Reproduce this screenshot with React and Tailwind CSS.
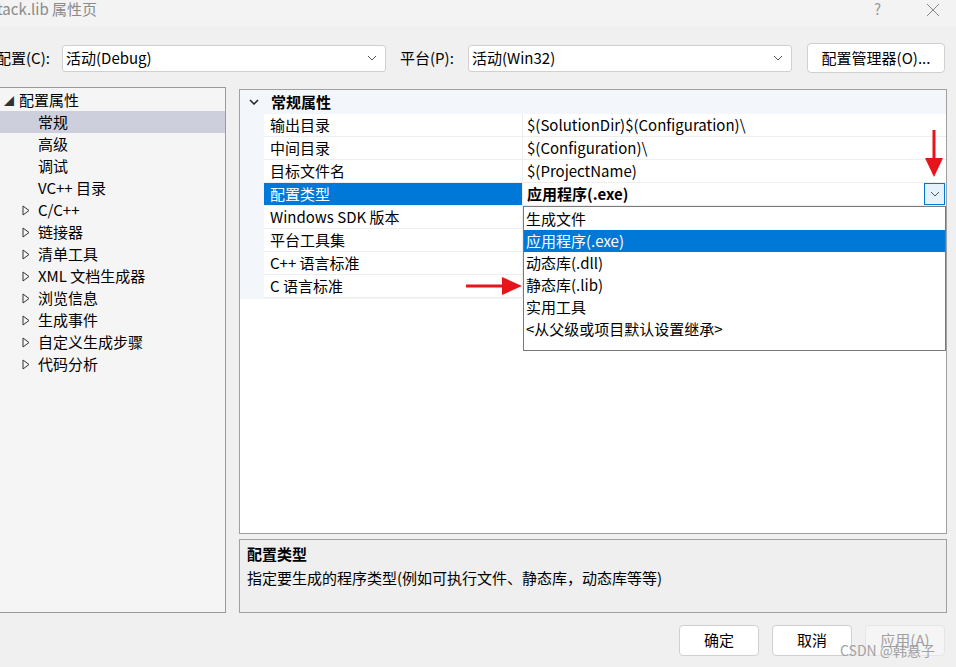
import React from "react";

const font = { fontFamily: '"Noto Sans CJK SC", "Noto Sans", sans-serif' };

const Chevron = ({ className }) => (
	<svg width="10" height="6" viewBox="0 0 10 6" className={className}>
		<path d="M1 1 L5 5 L9 1" fill="none" stroke="#555" strokeWidth="1" />
	</svg>
);

const RightTri = () => (
	<svg width="8" height="11" viewBox="0 0 8 11">
		<path d="M1 1 L7 5.5 L1 10 Z" fill="none" stroke="#333" strokeWidth="1" />
	</svg>
);

const treeItems = [
	{ label: "常规", child: true, selected: true },
	{ label: "高级", child: true },
	{ label: "调试", child: true },
	{ label: "VC++ 目录", child: true },
	{ label: "C/C++" },
	{ label: "链接器" },
	{ label: "清单工具" },
	{ label: "XML 文档生成器" },
	{ label: "浏览信息" },
	{ label: "生成事件" },
	{ label: "自定义生成步骤" },
	{ label: "代码分析" },
];

const props = [
	["输出目录", "$(SolutionDir)$(Configuration)\\"],
	["中间目录", "$(Configuration)\\"],
	["目标文件名", "$(ProjectName)"],
	["配置类型", "应用程序(.exe)", true],
	["Windows SDK 版本", ""],
	["平台工具集", ""],
	["C++ 语言标准", ""],
	["C 语言标准", ""],
];

const options = [
	"生成文件",
	"应用程序(.exe)",
	"动态库(.dll)",
	"静态库(.lib)",
	"实用工具",
	"<从父级或项目默认设置继承>",
];

export default function App() {
	return (
		<div
			style={font}
			className="w-[956px] h-[667px] bg-[#f0f0f0] text-[15px] text-black overflow-hidden relative">
			{/* title bar */}
			<div className="h-[27px] bg-[#f3f3f3] flex items-center justify-between">
				<span className="ml-[-3px] text-[#8a8a8a] -mt-[8px]">tack.lib 属性页</span>
				<div className="flex items-center gap-[45px] mr-[16px] -mt-[8px] text-[#9a9a9a]">
					<span className="text-[15px]">?</span>
					<svg width="14" height="14" viewBox="0 0 14 14">
						<path d="M1 1 L13 13 M13 1 L1 13" stroke="#888" strokeWidth="1" />
					</svg>
				</div>
			</div>

			{/* toolbar */}
			<div className="h-[60px] flex items-center pt-[2px]">
				<span className="ml-[-4px] w-[66px]">配置(C):</span>
				<div className="w-[324px] h-[27px] bg-white border border-[#d0d0d0] rounded-[3px] flex items-center justify-between px-[3px]">
					<span>活动(Debug)</span>
					<Chevron className="mr-[5px]" />
				</div>
				<span className="ml-[14px] w-[68px]">平台(P):</span>
				<div className="w-[324px] h-[27px] bg-white border border-[#d0d0d0] rounded-[3px] flex items-center justify-between px-[3px]">
					<span>活动(Win32)</span>
					<Chevron className="mr-[5px]" />
				</div>
				<div className="ml-[15px] w-[138px] h-[30px] bg-white border border-[#d0d0d0] rounded-[4px] flex items-center justify-center">
					配置管理器(O)...
				</div>
			</div>

			{/* main */}
			<div className="flex h-[526px]">
				<div className="w-[226px] bg-[#f5f5f5] border-t border-r border-b border-[#999] pt-[1px]">
					<div className="h-[22px] flex items-center">
						<span className="ml-[4px] w-[15px] text-[10px] text-[#333]">◢</span>
						<span>配置属性</span>
					</div>
					{treeItems.map((it) => (
						<div
							key={it.label}
							className={`h-[22px] flex items-center ${it.selected ? "bg-[#cdd0dc]" : ""}`}>
							<span className="w-[38px] flex justify-end pr-[8px]">
								{!it.child && <RightTri />}
							</span>
							<span>{it.label}</span>
						</div>
					))}
				</div>

				<div className="ml-[13px] w-[708px] flex flex-col">
					{/* property grid */}
					<div className="mt-[2px] h-[446px] bg-white border border-[#a0a0a0] relative">
						<div className="h-[24px] bg-[#f3f6fb] flex items-center font-bold">
							<svg width="10" height="6" viewBox="0 0 10 6" className="ml-[9px] mr-[12px]">
								<path d="M1 1 L5 5 L9 1" fill="none" stroke="#222" strokeWidth="1.5" />
							</svg>
							<span>常规属性</span>
						</div>
						{props.map(([name, value, sel]) => (
							<div key={name} className="flex h-[23px] bg-[#f3f6fb]">
								<div className="w-[24px]" />
								<div
									className={`w-[258px] flex items-center pl-[6px] border-b border-[#eeeeee] ${sel ? "bg-[#0078d7] text-white" : "bg-white"}`}>
									{name}
								</div>
								<div className="w-px bg-[#eeeeee]" />
								<div
									className={`flex-1 flex items-center justify-between pl-[4px] bg-white border-b border-[#eeeeee] ${sel ? "font-bold" : ""}`}>
									<span>{value}</span>
									{sel && (
										<div className="w-[21px] h-[22px] bg-[#e5f1fb] border border-[#0078d7] flex items-center justify-center mr-[1px]">
											<Chevron />
										</div>
									)}
								</div>
							</div>
						))}
						<div className="h-[1px] bg-[#f3f6fb]" />

						{/* dropdown list */}
						<div className="absolute left-[283px] top-[116px] w-[423px] h-[145px] bg-white border border-[#7a7a7a] pt-[1px]">
							{options.map((o, i) => (
								<div
									key={o}
									className={`h-[22px] flex items-center pl-[2px] ${i === 1 ? "bg-[#0078d7] text-white" : ""}`}>
									{o}
								</div>
							))}
						</div>
					</div>

					{/* description */}
					<div className="mt-[5px] h-[74px] border border-[#a0a0a0] bg-[#efefef] px-[7px] pt-[2px]">
						<div className="font-bold leading-[24px]">配置类型</div>
						<div className="leading-[24px]">指定要生成的程序类型(例如可执行文件、静态库，动态库等等)</div>
					</div>
				</div>
			</div>

			{/* footer buttons */}
			<div className="flex justify-end gap-[13px] mr-[11px] mt-[12px]">
				<div className="w-[80px] h-[31px] bg-white border border-[#d0d0d0] rounded-[4px] flex items-center justify-center">
					确定
				</div>
				<div className="w-[80px] h-[31px] bg-white border border-[#d0d0d0] rounded-[4px] flex items-center justify-center">
					取消
				</div>
				<div className="w-[80px] h-[31px] bg-[#f5f5f5] border border-[#e5e5e5] rounded-[4px] flex items-center justify-center text-[#a0a0a0]">
					应用(A)
				</div>
			</div>

			{/* watermark */}
			<div className="absolute left-[840px] top-[640px] text-[14px] text-[#9a9a9a] opacity-90">
				CSDN @韩悬子
			</div>

			{/* red arrows */}
			<svg className="absolute left-[920px] top-[128px]" width="28" height="52" viewBox="0 0 28 52">
				<path d="M14 2 L14 32" stroke="#e8141b" strokeWidth="3" />
				<path d="M5 30 L23 30 L14 49 Z" fill="#e8141b" />
			</svg>
			<svg className="absolute left-[464px] top-[272px]" width="60" height="28" viewBox="0 0 60 28">
				<path d="M2 14 L40 14" stroke="#e8141b" strokeWidth="3" />
				<path d="M38 5 L58 14 L38 23 Z" fill="#e8141b" />
			</svg>
		</div>
	);
}
